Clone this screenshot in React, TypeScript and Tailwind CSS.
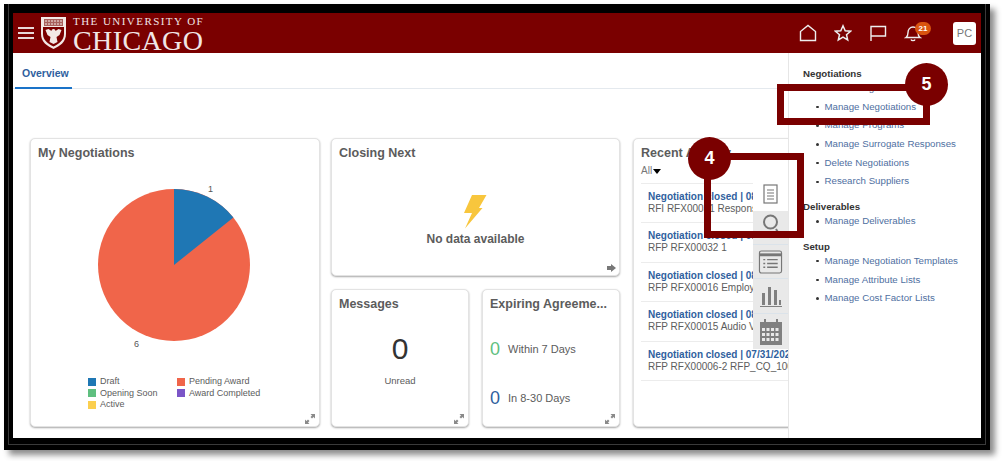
import React from 'react';

const tiles = [
  { title: 'Negotiation closed | 08/14/2024', sub: 'RFI RFX00031 Response Required' },
  { title: 'Negotiation closed | 08/12/2024', sub: 'RFP RFX00032 1' },
  { title: 'Negotiation closed | 08/09/2024', sub: 'RFP RFX00016 Employee Benefits' },
  { title: 'Negotiation closed | 08/05/2024', sub: 'RFP RFX00015 Audio Visual' },
  { title: 'Negotiation closed | 07/31/2024', sub: 'RFP RFX00006-2 RFP_CQ_100' },
];

const menu = [
  { heading: 'Negotiations', items: ['Create Negotiation', 'Manage Negotiations', 'Manage Programs', 'Manage Surrogate Responses', 'Delete Negotiations', 'Research Suppliers'] },
  { heading: 'Deliverables', items: ['Manage Deliverables'] },
  { heading: 'Setup', items: ['Manage Negotiation Templates', 'Manage Attribute Lists', 'Manage Cost Factor Lists'] },
];

const legend = [
  { label: 'Draft', color: 'bg-[#1f77b4]' },
  { label: 'Pending Award', color: 'bg-[#f0654a]' },
  { label: 'Opening Soon', color: 'bg-[#5fbf7f]' },
  { label: 'Award Completed', color: 'bg-[#7b55c7]' },
  { label: 'Active', color: 'bg-[#fbcf4f]' },
];

function Shield() {
  return (
    <svg width="27" height="34" viewBox="0 0 27 34" className="shrink-0">
      <path d="M1 1h25v17c0 8-6 12-12.500 15C7 30 1 26 1 18z" fill="#f3e9e6" />
      <rect x="4" y="3" width="19" height="7" fill="#a8605c" />
      <path d="M5 5h17M5 8h17" stroke="#f3e9e6" strokeWidth="1" strokeDasharray="2 1" />
      <path d="M3 11h21v7c0 6-5 10-10.500 12.500C8 28 3 24 3 18z" fill="#7a0000" />
      <path d="M13.500 13c1.500 0 2 1 2 2l3-2 3 1-2 5-3 2 1 5-4 2-4-2 1-5-3-2-2-5 3-1 3 2c0-1 .5-2 2-2z" fill="#f3e9e6" />
    </svg>
  );
}

function Expand() {
  return (
    <svg width="10" height="10" viewBox="0 0 10 10" className="absolute right-[4px] bottom-[2px]" fill="#8a8a8a">
      <path d="M10 0v4.500L8.500 3 7 4.500 5.500 3 7 1.500 5.500 0zM0 10V5.500L1.500 7 3 5.500 4.500 7 3 8.500 4.500 10z" />
    </svg>
  );
}

function Card({ title, className, children }: { title: string; className: string; children?: React.ReactNode }) {
  return (
    <div className={`relative rounded-[5px] bg-white border border-[#e3e3e3] shadow-[0_1px_2px_rgba(0,0,0,0.35)] ${className}`}>
      <div className="pl-[7px] pt-[6px] text-[12.500px] leading-[16px] font-bold text-[#5c5c5c] whitespace-nowrap">{title}</div>
      {children}
    </div>
  );
}

function Pie() {
  return (
    <svg width="288" height="192" viewBox="0 0 288 192" className="block">
      <circle cx="143" cy="104" r="76" fill="#f0654a" />
      <path d="M143 104V28A76 76 0 0 1 202.400 56.600z" fill="#1f77b4" />
      <text x="177" y="31" fontSize="9" fill="#555">1</text>
      <text x="103" y="186" fontSize="9" fill="#555">6</text>
    </svg>
  );
}

export default function App() {
  return (
    <div className="relative w-[1004px] h-[461px] bg-white overflow-hidden font-['Liberation_Sans',Arial,sans-serif] pl-[4px] pt-[4px]">
      {/* black picture frame round the screenshot */}
      <div className="w-[986px] h-[446px] bg-black pl-[4px] pr-[4px] pb-[5px] shadow-[5px_5px_6px_rgba(0,0,0,0.45)]">
        <div className="h-full border-x border-b border-[#3a3a3a] pl-[4px] pr-[4px] pt-[9px] pb-[5px]">
          <div className="w-[968px] h-[425px] bg-white flex flex-col overflow-hidden">
            {/* Header */}
            <header className="h-[40px] shrink-0 bg-[#7a0000] flex items-center text-white">
              <div className="ml-[5px] w-[16px] flex flex-col gap-[3px] shrink-0">
                <span className="h-[2px] bg-[#e8d8d8]" />
                <span className="h-[2px] bg-[#e8d8d8]" />
                <span className="h-[2px] bg-[#e8d8d8]" />
              </div>
              <div className="ml-[6px]">
                <Shield />
              </div>
              <div className="ml-[6px] mt-[4px] font-['Liberation_Serif',serif] text-[#f1e6e6] flex flex-col">
                <span className="text-[11px] leading-[11px] tracking-[1.450px] whitespace-nowrap">THE UNIVERSITY OF</span>
                <span className="text-[28px] leading-[27px] tracking-[0.400px] whitespace-nowrap">CHICAGO</span>
              </div>
              <div className="ml-auto flex items-center text-[#eee]">
                <svg width="18" height="18" viewBox="0 0 18 18" fill="none" stroke="currentColor" strokeWidth="1.400" className="mr-[17px]">
                  <path d="M1.500 16.500V7.500L9 1.500l7.500 6v9z" />
                </svg>
                <svg width="18" height="18" viewBox="0 0 18 18" fill="none" stroke="currentColor" strokeWidth="1.500" className="mr-[17px]">
                  <path d="M9 1.800l2.200 4.900 5.300.5-4 3.500 1.200 5.200L9 13.200l-4.700 2.700 1.200-5.200-4-3.500 5.300-.5z" />
                </svg>
                <svg width="18" height="18" viewBox="0 0 18 18" fill="none" stroke="currentColor" strokeWidth="1.400" className="mr-[17px]">
                  <path d="M2 17V2.500h14.500v9.500H2" />
                </svg>
                <div className="relative mr-[31px] w-[18px] h-[18px]">
                  <svg width="18" height="18" viewBox="0 0 18 18" fill="none" stroke="currentColor" strokeWidth="1.400">
                    <path d="M2 13.500c1.500-1 2-2.500 2-5 0-3 2-5.500 5-5.500s5 2.500 5 5.500c0 2.500.5 4 2 5zM7 15.500c.5 1.500 3.500 1.500 4 0" />
                  </svg>
                  <span className="absolute left-[11px] top-[-2px] w-[16px] h-[13px] rounded-full bg-[#d9540f] text-white text-[8px] font-bold leading-[13px] text-center">21</span>
                </div>
                <div className="mr-[5px] w-[23px] h-[23px] rounded-[3px] bg-white text-[#777] text-[11px] leading-[23px] text-center">PC</div>
              </div>
            </header>

            <div className="flex flex-1 min-h-0">
              {/* Main */}
              <main className="relative flex-1 min-w-0 overflow-hidden bg-white">
                <div className="h-[36px] border-b border-[#e4e9ee] pl-[2px]">
                  <div className="w-[57px] h-[36px] border-b-[2px] border-[#1a73c8] pl-[7px] pt-[14px] text-[10.500px] leading-[13px] font-bold text-[#2f5f9e]">Overview</div>
                </div>
                <div className="flex pl-[17px] pt-[49px] w-[900px]">
                  <Card title="My Negotiations" className="w-[290px] h-[289px] shrink-0">
                    <Pie />
                    <div className="ml-[57px] mt-[23px] grid grid-cols-[89px_1fr] text-[9px] leading-[11.500px] text-[#5c5c5c]">
                      {legend.map((item) => (
                        <div key={item.label} className="flex items-center gap-[4px]">
                          <span className={`w-[8px] h-[8px] ${item.color}`} />
                          <span>{item.label}</span>
                        </div>
                      ))}
                    </div>
                    <Expand />
                  </Card>

                  <div className="ml-[11px] w-[289px] shrink-0 flex flex-col gap-[13px]">
                    <Card title="Closing Next" className="h-[138px]">
                      <div className="flex flex-col items-center mt-[34px]">
                        <svg width="23" height="34" viewBox="0 0 23 34">
                          <path d="M8 0h14.500L15 13h3.500L1 33.500 8 18H0z" fill="#f8c63d" />
                        </svg>
                        <div className="mt-[3px] text-[12px] leading-[14px] font-bold text-[#5c5c5c]">No data available</div>
                      </div>
                      <svg width="9" height="8" viewBox="0 0 9 8" className="absolute right-[3px] bottom-[3px]" fill="#777">
                        <path d="M0 2h4V0l5 4-5 4V6H0z" />
                      </svg>
                    </Card>
                    <div className="flex gap-[13px]">
                      <Card title="Messages" className="w-[138px] h-[138px] shrink-0">
                        <div className="mt-[20px] text-center text-[30px] leading-[34px] text-[#333]">0</div>
                        <div className="mt-[9px] text-center text-[9.500px] leading-[12px] text-[#5c5c5c]">Unread</div>
                        <Expand />
                      </Card>
                      <Card title="Expiring Agreeme..." className="flex-1 h-[138px]">
                        <div className="ml-[7px] mt-[27px] flex items-center h-[20px] text-[11px] text-[#5c5c5c]">
                          <span className="w-[18px] text-[18px] text-[#5fbf7f]">0</span>
                          <span>Within 7 Days</span>
                        </div>
                        <div className="ml-[7px] mt-[29px] flex items-center h-[20px] text-[11px] text-[#5c5c5c]">
                          <span className="w-[18px] text-[18px] text-[#2f5f9e]">0</span>
                          <span>In 8-30 Days</span>
                        </div>
                        <Expand />
                      </Card>
                    </div>
                  </div>

                  <Card title="Recent Activity" className="ml-[13px] w-[260px] h-[289px] shrink-0">
                    <div className="pl-[7px] mt-[4px] flex items-center gap-[1px] text-[10px] leading-[12px] text-[#777]">
                      All
                      <span className="w-0 h-0 border-x-[4px] border-x-transparent border-t-[5px] border-t-black mt-[1px]" />
                    </div>
                    <div className="mt-[6px] ml-[7px] border-t border-[#ececec]">
                      {tiles.map((tile) => (
                        <div key={tile.sub} className="h-[39.400px] border-b border-[#ececec] pt-[7px] whitespace-nowrap">
                          <div className="ml-[7px] text-[10px] leading-[12px] font-bold text-[#2f5f9e]">{tile.title}</div>
                          <div className="ml-[7px] text-[10px] leading-[12px] text-[#5c5c5c]">{tile.sub}</div>
                        </div>
                      ))}
                    </div>
                  </Card>
                </div>

                {/* Side rail floating over the recent activity card */}
                <div className="absolute right-0 top-[124px] w-[35px] flex flex-col bg-[#e9e9e9]">
                  <div className="h-[34px] bg-white flex items-center justify-center">
                    <svg width="15" height="20" viewBox="0 0 15 20" fill="none" stroke="#777" strokeWidth="1.200">
                      <rect x="1" y="1" width="13" height="18" />
                      <path d="M4 6h7M4 9h7M4 12h7M4 15h7" />
                    </svg>
                  </div>
                  <div className="h-[34px] flex justify-center pt-[3px] border-b border-[#dbe3ea]">
                    <svg width="18" height="24" viewBox="0 0 18 24" fill="none" stroke="#777" strokeWidth="2">
                      <circle cx="8.500" cy="8" r="6.500" />
                      <path d="M14 15l3 5" />
                    </svg>
                  </div>
                  <div className="h-[34px] flex items-center justify-center border-b border-[#dbe3ea]">
                    <svg width="25" height="24" viewBox="0 0 25 25" fill="none" stroke="#777" strokeWidth="1.200">
                      <rect x="1" y="1" width="23" height="23" rx="2" />
                      <path d="M1 5h23" strokeWidth="3" />
                      <path d="M5 10h2M9 10h11M5 14h2M9 14h11M5 18h2M9 18h11" strokeWidth="1.500" />
                    </svg>
                  </div>
                  <div className="h-[35px] flex items-center justify-center border-b border-[#dbe3ea]">
                    <svg width="22" height="22" viewBox="0 0 22 22" fill="#808080">
                      <path d="M2 8h3v12H2zM8 2h3v18H8zM14 5h3v15h-3zM19 15h2v5h-2zM0 21h22v1H0z" />
                    </svg>
                  </div>
                  <div className="h-[35px] pt-[1px] flex items-center justify-center">
                    <svg width="24" height="26" viewBox="0 0 24 26" fill="#808080">
                      <path d="M1 3h22v23H1z" />
                      <path d="M5 0h2v4H5zM17 0h2v4h-2z" />
                      <path d="M3 9h3v3H3zM7.500 9h3v3h-3zM12 9h3v3h-3zM16.500 9h3v3h-3zM3 14h3v3H3zM7.500 14h3v3h-3zM12 14h3v3h-3zM16.500 14h3v3h-3zM3 19h3v3H3zM7.500 19h3v3h-3zM12 19h3v3h-3zM16.500 19h3v3h-3z" fill="#e9e9e9" />
                    </svg>
                  </div>
                </div>
              </main>

              {/* Tasks panel */}
              <aside className="w-[193px] shrink-0 bg-white border-l border-[#e6e6e6] pl-[14px] pt-[14px] text-[9.700px]">
                {menu.map((section) => (
                  <div key={section.heading} className="mb-[9px]">
                    <div className="font-bold text-[#333] leading-[13px] mb-[-1px]">{section.heading}</div>
                    <ul>
                      {section.items.map((item) => (
                        <li key={item} className="h-[18.700px] leading-[18.700px] pl-[13px] flex items-center text-[#4f6f9f] whitespace-nowrap">
                          <span className="w-[2.500px] h-[2.500px] rounded-full bg-[#333] mr-[6px]" />
                          {item}
                        </li>
                      ))}
                    </ul>
                  </div>
                ))}
              </aside>
            </div>
          </div>
        </div>
      </div>

      {/* Call-outs */}
      <div className="absolute left-[704px] top-[153px] w-[100px] h-[85px] border-[7px] border-[#7a0000]" />
      <div className="absolute left-[688px] top-[137px] w-[43px] h-[43px] rounded-full bg-[#7a0000] text-white text-[18px] font-bold leading-[43px] text-center">4</div>
      <div className="absolute left-[777px] top-[84px] w-[153px] h-[41px] border-[7px] border-[#7a0000]" />
      <div className="absolute left-[905px] top-[63px] w-[43px] h-[43px] rounded-full bg-[#7a0000] text-white text-[18px] font-bold leading-[43px] text-center">5</div>
    </div>
  );
}
